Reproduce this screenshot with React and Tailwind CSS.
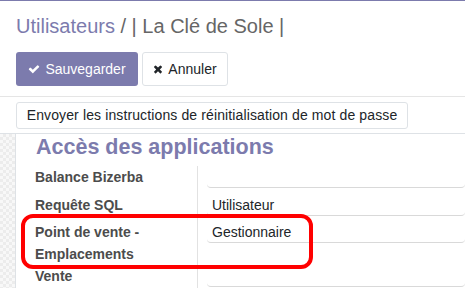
import React from 'react';

const font = { fontFamily: '"Liberation Sans", Arial, sans-serif' };

function CheckIcon() {
  return (
    <svg viewBox="0 0 1792 1792" className="w-[12px] h-[12px]" fill="currentColor">
      <path d="M1671 566q0 40-28 68l-724 724-136 136q-28 28-68 28t-68-28l-136-136-362-362q-28-28-28-68t28-68l136-136q28-28 68-28t68 28l294 295 656-657q28-28 68-28t68 28l136 136q28 28 28 68z" />
    </svg>
  );
}

function TimesIcon() {
  return (
    <svg viewBox="0 0 1408 1792" className="w-[10px] h-[12px]" fill="currentColor">
      <path d="M1298 1322q0 40-28 68l-136 136q-28 28-68 28t-68-28l-294-294-294 294q-28 28-68 28t-68-28l-136-136q-28-28-28-68t28-68l294-294-294-294q-28-28-28-68t28-68l136-136q28-28 68-28t68 28l294 294 294-294q28-28 68-28t68 28l136 136q28 28 28 68t-28 68l-294 294 294 294q28 28 28 68z" />
    </svg>
  );
}

function Row({ label, value, h, labelClass = 'leading-[22px]' }) {
  return (
    <div className="flex" style={{ height: h }}>
      <div className={`w-[182px] shrink-0 pl-[19px] font-bold text-[14px] text-[#4c4c4c] border-r border-[#e2e2e2] ${labelClass}`}>
        {label}
      </div>
      <div className="flex-1 pl-[9px]">
        <div className="h-[22px] border-b border-[#d9d9d9] rounded-[4px] pl-[5px] text-[14px] leading-[22px] text-[#212529]">
          {value}
        </div>
      </div>
    </div>
  );
}

export default function App() {
  return (
    <div className="w-[465px] h-[288px] overflow-hidden bg-white relative border-t border-[#7c7bad]" style={font}>
      <div className="px-4 border-b border-[#e5e5e5] h-[96px]">
        <div className="pt-[12px] text-[20px] leading-[26px]">
          <span className="text-[#7c7bad]">Utilisateurs</span>
          <span className="text-[#666666]"> / | La Clé de Sole |</span>
        </div>
        <div className="flex gap-[4px] mt-[13px]">
          <button className="h-[34px] w-[122px] rounded-[3px] bg-[#7c7bad] text-white text-[14px] flex items-center justify-center gap-[5px]">
            <CheckIcon />
            Sauvegarder
          </button>
          <button className="h-[34px] w-[86px] rounded-[3px] bg-white border border-[#dee2e6] text-[#212529] text-[14px] flex items-center justify-center gap-[5px]">
            <TimesIcon />
            Annuler
          </button>
        </div>
      </div>
      <div className="h-[37px] px-4 pt-[5px] border-b border-[#dee2e6]">
        <button className="h-[27px] w-[392px] rounded-[3px] bg-white border border-[#dee2e6] text-[#212529] text-[14px] leading-[25px] tracking-[0.12px] whitespace-nowrap">
          Envoyer les instructions de réinitialisation de mot de passe
        </button>
      </div>
      <div className="flex h-[160px]">
        <div className="w-[16px] shrink-0 border-r border-[#dee2e6] bg-[repeating-conic-gradient(#ececec_0%_25%,#f8f8f8_0%_50%)] bg-[length:6px_6px]" />
        <div className="flex-1">
          <div className="pl-[20px] text-[21.5px] font-bold text-[#7c7bad] leading-[24px] pt-[1px] whitespace-nowrap">
            Accès des applications
          </div>
          <div className="mt-[7px]">
            <Row label="Balance Bizerba" value="" h={28} />
            <Row label="Requête SQL" value="Utilisateur" h={27} />
            <Row label={<>Point de vente -<br />Emplacements</>} value="Gestionnaire" h={44} />
            <Row label="Vente" value="" h={24} />
          </div>
        </div>
      </div>
      <div className="absolute left-[21px] top-[213px] w-[292px] h-[55px] border-[4px] border-[#ff0000] rounded-[12px]" />
    </div>
  );
}
